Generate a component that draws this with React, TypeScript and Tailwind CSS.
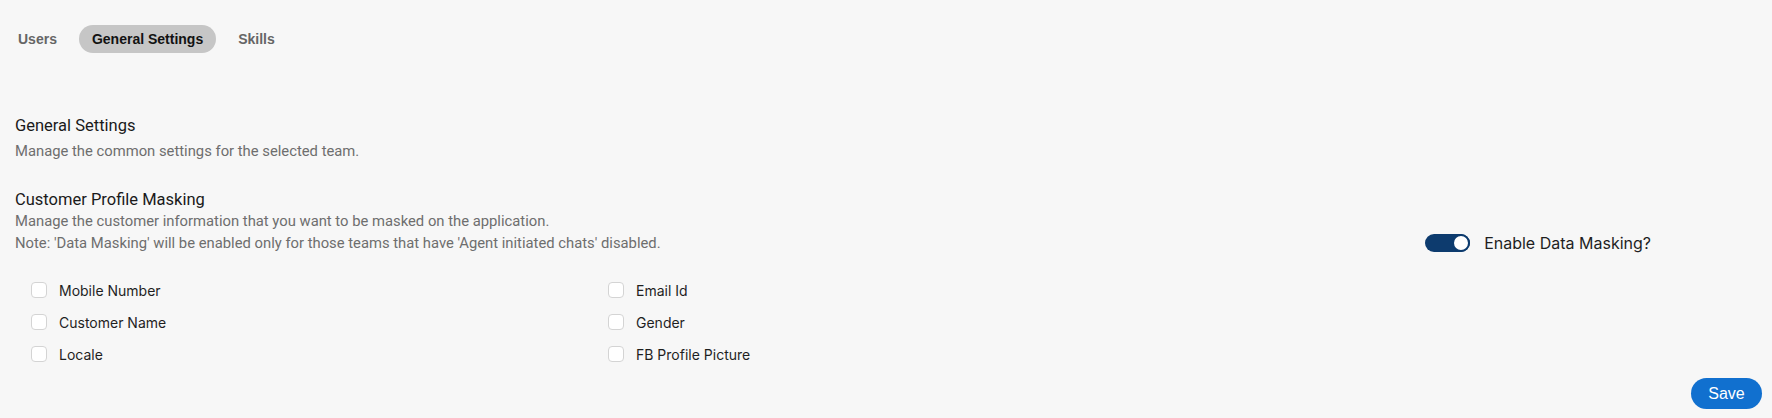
import { useState } from 'react'

const fields = [
  ['Mobile Number', 'Email Id'],
  ['Customer Name', 'Gender'],
  ['Locale', 'FB Profile Picture'],
]

function Checkbox({ label }: { label: string }) {
  const [checked, setChecked] = useState(false)
  return (
    <label className="flex items-center h-[32px] gap-[12px] cursor-pointer">
      <span
        onClick={() => setChecked((c) => !c)}
        className={`w-[16px] h-[16px] rounded-[4px] border ${
          checked ? 'bg-[#1170cf] border-[#1170cf]' : 'bg-white border-[#d4d4d4]'
        }`}
      />
      <span className="text-[14px] text-[#1f1f1f] font-['Inter',sans-serif]">{label}</span>
    </label>
  )
}

export default function App() {
  const [tab, setTab] = useState('General Settings')
  const [masking, setMasking] = useState(true)

  return (
    <div className="min-h-[418px] w-full bg-[#f7f7f7] font-['Roboto',sans-serif]">
      {/* Tabs */}
      <div className="flex items-center gap-[9px] pl-[5px] pt-[25px]">
        {['Users', 'General Settings', 'Skills'].map((t) => (
          <button
            key={t}
            onClick={() => setTab(t)}
            className={`h-[28px] px-[13px] rounded-full text-[14px] font-bold font-['Liberation_Sans',Arial,sans-serif] ${
              tab === t ? 'bg-[#c6c6c6] text-[#121212]' : 'text-[#666666]'
            }`}
          >
            {t}
          </button>
        ))}
      </div>

      <div className="pl-[15px]">
        <h2 className="mt-[61px] text-[16.5px] leading-[24px] text-[#1a1a1a]">General Settings</h2>
        <p className="mt-[3px] text-[14.8px] leading-[20px] text-[#6e6e6e]">
          Manage the common settings for the selected team.
        </p>

        <div className="flex items-end justify-between">
          <div>
            <h3 className="mt-[28px] text-[16.5px] leading-[22px] text-[#1a1a1a]">Customer Profile Masking</h3>
            <p className="text-[14.8px] leading-[21px] text-[#6e6e6e]">
              Manage the customer information that you want to be masked on the application.
            </p>
            <p className="text-[14.8px] leading-[22px] text-[#6e6e6e]">
              Note: 'Data Masking' will be enabled only for those teams that have 'Agent initiated chats' disabled.
            </p>
          </div>
          <div className="flex items-center gap-[14px] h-[22px] mr-[121px] font-['Inter',sans-serif]">
            <button
              onClick={() => setMasking((m) => !m)}
              className={`relative w-[45px] h-[18px] rounded-full ${masking ? 'bg-[#0d3b6e]' : 'bg-[#bdbdbd]'}`}
              aria-label="Enable Data Masking?"
            >
              <span
                className={`absolute top-0 w-[18px] h-[18px] rounded-full bg-white border-[2px] ${
                  masking ? 'right-0 border-[#0d3b6e]' : 'left-0 border-[#bdbdbd]'
                }`}
              />
            </button>
            <span className="text-[16px] text-[#1f1f1f]">Enable Data Masking?</span>
          </div>
        </div>

        <div className="mt-[20px] pl-[16px] grid grid-cols-[577px_577px]">
          {fields.map(([a, b]) => (
            <div key={a} className="contents">
              <Checkbox label={a} />
              <Checkbox label={b} />
            </div>
          ))}
        </div>
      </div>

      <div className="flex justify-end pr-[10px] mt-[8px] pb-[10px]">
        <button className="w-[71px] h-[31px] rounded-full bg-[#1170cf] text-white text-[16px] font-['Liberation_Sans',Arial,sans-serif]">
          Save
        </button>
      </div>
    </div>
  )
}
